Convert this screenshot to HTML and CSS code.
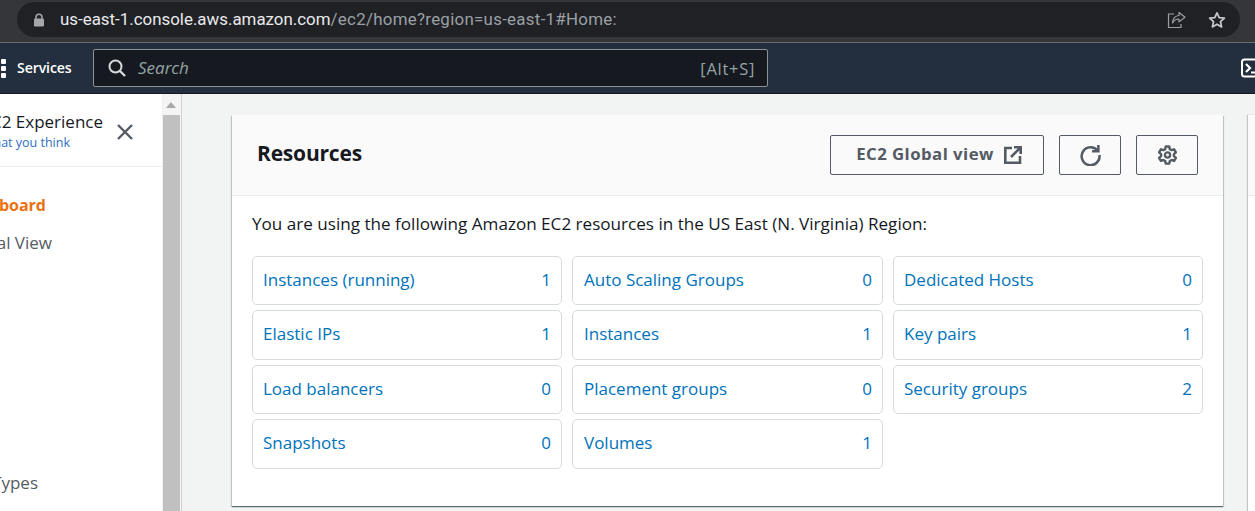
FILE: index.html
```html
<!DOCTYPE html>
<html lang="en">
<head>
<meta charset="utf-8">
<title>EC2 Dashboard</title>
<link rel="stylesheet" href="styles.css">
</head>
<body>
<div class="chrome">
  <div class="urlbar">
    <svg class="lock" width="12" height="14" viewBox="0 0 12 14"><path d="M3 6V4.2a3 3 0 0 1 6 0V6" fill="none" stroke="#a5a7aa" stroke-width="1.5"/><rect x="1" y="5.5" width="10" height="8" rx="1.2" fill="#a5a7aa"/></svg>
    <div class="url"><span class="host">us-east-1.console.aws.amazon.com</span><span class="path">/ec2/home?region=us-east-1#Home:</span></div>
    <svg class="share" width="20" height="18" viewBox="0 0 20 18"><path d="M7 3H1.500v13.500H14V13" fill="none" stroke="#9aa0a6" stroke-width="1.200"/><path d="M12 1.500l6 4.700-6 4.700V8C9 8 7 9.300 5.500 12 5.800 8 8 4.800 12 4.500z" fill="none" stroke="#9aa0a6" stroke-width="1.200" stroke-linejoin="round"/></svg>
    <svg class="star" width="18" height="18" viewBox="0 0 18 18"><path d="M9 1.800l2.200 4.800 5.200.6-3.900 3.500 1.100 5.200L9 13.300l-4.600 2.600 1.100-5.200L1.600 7.200l5.200-.6z" fill="none" stroke="#c8cbce" stroke-width="1.700" stroke-linejoin="round"/></svg>
  </div>
</div>
<header class="nav">
  <div class="grid-dots"><i></i><i></i><i></i></div>
  <span class="services">Services</span>
  <div class="search">
    <svg width="18" height="18" viewBox="0 0 18 18"><circle cx="7.500" cy="7.500" r="6" fill="none" stroke="#d5dbdb" stroke-width="2"/><path d="M12 12l5 5" stroke="#d5dbdb" stroke-width="2.400"/></svg>
    <span class="search-text">Search</span>
    <span class="search-key">[Alt+S]</span>
  </div>
  <svg class="cloudshell" width="14" height="20" viewBox="0 0 14 20"><rect x="1" y="1.500" width="24" height="17" rx="2.500" fill="none" stroke="#fff" stroke-width="2"/><path d="M5 6l4 4-4 4" fill="none" stroke="#fff" stroke-width="2.200"/><path d="M10 14.500h4" stroke="#fff" stroke-width="2"/></svg>
</header>
<div class="body">
  <aside class="side">
    <div class="notice">
      <div class="notice-text">
        <div class="notice-title">New EC2 Experience</div>
        <div class="notice-link">Tell us what you think</div>
      </div>
      <svg class="close" width="18" height="18" viewBox="0 0 18 18"><path d="M2 2l14 14M16 2L2 16" stroke="#545b64" stroke-width="2.400"/></svg>
    </div>
    <div class="side-list">
      <div class="side-item active">EC2 Dashboard</div>
      <div class="side-item global">EC2 Global View</div>
      <div class="side-item types">Instance Types</div>
    </div>
  </aside>
  <div class="scrollbar">
    <div class="arrow"></div>
    <div class="thumb"></div>
  </div>
  <main class="main">
    <section class="card">
      <div class="card-head">
        <h2>Resources</h2>
        <div class="actions">
          <button class="btn wide"><span class="btn-label">EC2 Global view</span>
            <svg width="18" height="18" viewBox="0 0 18 18"><path d="M8 2H1.300v14.700H16V10" fill="none" stroke="#545b64" stroke-width="2.600"/><path d="M7 11l8.500-8.500M10 1.300h6.700V8" fill="none" stroke="#545b64" stroke-width="2.600"/></svg>
          </button>
          <button class="btn icon">
            <svg width="21" height="21" viewBox="0 1 20 20"><path d="M16.800 6.500A8.500 8.500 0 1 0 18.500 10.500" fill="none" stroke="#545b64" stroke-width="2.400"/><path d="M17.500 1v6h-6" fill="none" stroke="#545b64" stroke-width="2.400"/></svg>
          </button>
          <button class="btn icon">
            <svg width="21" height="21" viewBox="0 0 20 20"><path d="M8.300 1.500h3.400l.5 2.500 1.700.9 2.400-.8 1.700 2.900-1.900 1.700v1.800l1.900 1.700-1.700 2.900-2.400-.8-1.700.9-.5 2.500H8.300l-.5-2.500-1.700-.9-2.400.8L2 12.200l1.900-1.700V8.700L2 7l1.700-2.900 2.400.8 1.700-.9z" fill="none" stroke="#545b64" stroke-width="2.300" stroke-linejoin="round"/><circle cx="10" cy="9.600" r="2.500" fill="none" stroke="#545b64" stroke-width="2.200"/></svg>
          </button>
        </div>
      </div>
      <div class="card-body">
        <p class="intro">You are using the following Amazon EC2 resources in the US East (N. Virginia) Region:</p>
        <div class="tiles">
          <a class="tile"><span>Instances (running)</span><span>1</span></a>
          <a class="tile"><span>Auto Scaling Groups</span><span>0</span></a>
          <a class="tile"><span>Dedicated Hosts</span><span>0</span></a>
          <a class="tile"><span>Elastic IPs</span><span>1</span></a>
          <a class="tile"><span>Instances</span><span>1</span></a>
          <a class="tile"><span>Key pairs</span><span>1</span></a>
          <a class="tile"><span>Load balancers</span><span>0</span></a>
          <a class="tile"><span>Placement groups</span><span>0</span></a>
          <a class="tile"><span>Security groups</span><span>2</span></a>
          <a class="tile"><span>Snapshots</span><span>0</span></a>
          <a class="tile"><span>Volumes</span><span>1</span></a>
        </div>
      </div>
    </section>
    <div class="card-next"><div class="next-head"></div></div>
  </main>
</div>
</body>
</html>
```
FILE: styles.css
```css
* { box-sizing: border-box; }
html, body { margin: 0; height: 100%; overflow: hidden; }
body { width: 1255px; height: 511px; font-family: "Open Sans", "Noto Sans", sans-serif; background: #f2f3f3; display: flex; flex-direction: column; }

.chrome { height: 43px; flex: none; background: #35363a; border-bottom: 1px solid #6b6d70; padding: 2px 15px 0 17px; }
.urlbar { height: 35px; border-radius: 18px; background: #202124; display: flex; align-items: center; padding: 0 14px 0 16px; }
.lock { flex: none; margin-right: 15px; }
.url { flex: 1; font: 16.900px/35px Roboto, sans-serif; white-space: nowrap; }
.host { color: #e8eaed; }
.path { color: #9aa0a6; letter-spacing: .28px; }
.share { flex: none; margin-right: 21px; }
.star { flex: none; }

.nav { height: 51px; flex: none; background: #232f3e; border-bottom: 1px solid #16191f; display: flex; align-items: center; padding-left: 1px; overflow: hidden; }
.grid-dots { width: 5px; display: flex; flex-direction: column; gap: 2px; margin-right: 11px; }
.grid-dots i { display: block; width: 5px; height: 5px; background: #fff; border-radius: 1px; }
.services { font: 600 14.100px/20px "Open Sans", sans-serif; color: #fff; width: 76px; letter-spacing: -.1px; }
.search { width: 675px; height: 38px; background: #16191f; border: 1px solid #879596; border-radius: 2px; display: flex; align-items: center; padding: 0 12px 0 14px; }
.search-text { flex: 1; margin-left: 12px; color: #95a5a6; font: italic 17px/20px "Open Sans", sans-serif; }
.search-key { color: #95a5a6; font-size: 16.500px; letter-spacing: .7px; }
.cloudshell { margin-left: auto; flex: none; }

.body { flex: 1; display: flex; min-height: 0; }
.side { width: 162px; flex: none; background: #fff; overflow: hidden; }
.notice { height: 73px; border-bottom: 1px solid #eaeded; display: flex; padding-top: 16px; }
.notice-text { width: 103px; flex: none; display: flex; flex-direction: column; align-items: flex-start; white-space: nowrap; direction: rtl; }
.notice-title { font-size: 17px; line-height: 24px; color: #16191f; direction: ltr; }
.notice-link { font-size: 12.500px; line-height: 18px; color: #2f6fc0; direction: ltr; margin-right: 33px; }
.close { margin: 13px 0 0 13px; flex: none; }
.side-list { display: flex; flex-direction: column; align-items: flex-end; padding-top: 26px; }
.side-item { font-size: 17px; line-height: 24px; color: #545b64; white-space: nowrap; flex: none; }
.side-item.active { color: #ec7211; font-weight: 700; font-size: 16px; margin-right: 116px; }
.side-item.global { margin: 14px 110px 0 0; }
.side-item.types { margin: 216px 124px 0 0; }

.scrollbar { width: 20px; flex: none; background: #f4f4f4; border-right: 1px solid #cfd2d2; border-left: 1px solid #f0f0f0; }
.arrow { height: 21px; position: relative; }
.arrow::before { content: ""; position: absolute; left: 3px; top: 8px; border-left: 5px solid transparent; border-right: 5px solid transparent; border-bottom: 6px solid #a8a8a8; }
.thumb { height: 396px; width: 17px; background: #c0c0c0; }

.main { flex: 1; display: flex; padding: 21px 0 0 50px; min-width: 0; gap: 25px; overflow: hidden; }
.card { width: 991px; height: 391px; flex: none; background: #fff; box-shadow: 0 1px 1px 0 rgba(0,28,36,.5), 1px 1px 1px 0 rgba(0,28,36,.15), -1px 1px 1px 0 rgba(0,28,36,.15); }
.card-next { width: 40px; height: 420px; flex: none; background: #fff; box-shadow: -1px 0 1px 0 rgba(0,28,36,.2); }
.next-head { height: 81px; background: #fafafa; border-bottom: 1px solid #eaeded; }

.card-head { height: 81px; background: #fafafa; border-bottom: 1px solid #eaeded; display: flex; align-items: center; justify-content: space-between; padding: 0 25px; }
.card-head h2 { margin: 0; font-size: 21px; font-weight: 700; color: #16191f; line-height: 28px; letter-spacing: -.2px; position: relative; top: -2px; }
.actions { display: flex; gap: 15px; }
.btn { height: 40px; background: transparent; border: 1px solid #545b64; border-radius: 2px; display: flex; align-items: center; justify-content: center; font: 700 16.800px/20px "Open Sans", sans-serif; color: #545b64; padding: 0; }
.btn-label { padding-bottom: 3px; letter-spacing: .45px; }
.btn.wide { width: 214px; gap: 10px; padding-left: 4px; }
.btn.icon { width: 62px; }

.card-body { padding: 16px 20px 0; }
.intro { margin: 0 0 20px; font-size: 17.100px; line-height: 24px; color: #16191f; white-space: nowrap; }
.tiles { display: grid; grid-template-columns: 310px 311px 310px; grid-template-rows: 49px 50px 49px 50px; gap: 5px 10px; }
.tile { border: 1px solid #d5dbdb; border-radius: 5px; display: flex; align-items: center; justify-content: space-between; padding: 0 10px 2px; color: #0073bb; font-size: 17px; line-height: 24px; background: #fff; }
.tile:nth-child(3n + 2) { padding-left: 11px; }
```
